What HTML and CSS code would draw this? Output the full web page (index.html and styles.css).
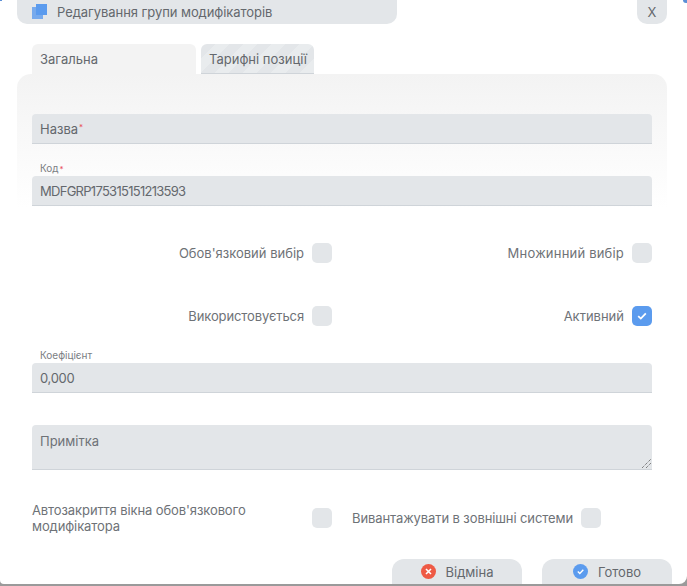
FILE: index.html
```html
<!DOCTYPE html>
<html lang="uk">
<head>
<meta charset="utf-8">
<title>Редагування групи модифікаторів</title>
<link rel="stylesheet" href="styles.css">
</head>
<body>
<span class="peek peek-left"></span>
<span class="peek peek-right"></span>
<div class="dialog">
  <header class="head">
    <div class="title">
      <svg class="title-icon" width="15" height="15" viewBox="0 0 15 15"><rect x="4" y="0" width="11" height="11" fill="#5b9bee"/><rect x="0" y="3" width="11" height="12" fill="#5b9bee" opacity=".8"/></svg>
      <span class="title-text">Редагування групи модифікаторів</span>
    </div>
    <button class="close">X</button>
  </header>
  <nav class="tabs">
    <div class="tab tab-active">Загальна</div>
    <div class="tab tab-off">Тарифні позиції</div>
  </nav>
  <main class="panel">
    <div class="field field-name"><div class="input">Назва<i class="req">*</i></div></div>
    <div class="field field-code">
      <label class="mini">Код<i class="req">*</i></label>
      <div class="input input-code">MDFGRP175315151213593</div>
    </div>
    <div class="checks checks-a">
      <div class="check"><span>Обов'язковий вибір</span><b class="box"></b></div>
      <div class="check"><span class="wide">Множинний вибір</span><b class="box"></b></div>
    </div>
    <div class="checks checks-b">
      <div class="check"><span class="tight">Використовується</span><b class="box"></b></div>
      <div class="check"><span>Активний</span><b class="box box-on"><svg width="10" height="8" viewBox="0 0 10 8"><path d="M1.2 4.2 3.8 6.6 8.8 1.4" fill="none" stroke="#fff" stroke-width="1.8"/></svg></b></div>
    </div>
    <div class="field field-coef">
      <label class="mini">Коефіцієнт</label>
      <div class="input input-num">0,000</div>
    </div>
    <div class="note">Примітка
      <svg class="grip" width="9" height="9" viewBox="0 0 9 9"><path d="M0 9 9 0M4 9 9 4" stroke="#555" stroke-width="1" stroke-dasharray="1 1" fill="none"/></svg>
    </div>
    <div class="bottom-row">
      <div class="auto"><span class="auto-text">Автозакриття вікна обов'язкового модифікатора</span><b class="box"></b></div>
      <div class="export"><span class="tight">Вивантажувати в зовнішні системи</span><b class="box"></b></div>
    </div>
  </main>
  <footer class="actions">
    <button class="btn"><svg width="15" height="15" viewBox="0 0 15 15"><circle cx="7.5" cy="7.5" r="7.5" fill="#ee5a45"/><path d="M5 5l5 5M10 5l-5 5" stroke="#fff" stroke-width="1.6"/></svg>Відміна</button>
    <button class="btn"><svg width="15" height="15" viewBox="0 0 15 15"><circle cx="7.5" cy="7.5" r="7.5" fill="#5b9bee"/><path d="M4.8 7.6 6.8 9.5 10.3 5.8" fill="none" stroke="#fff" stroke-width="1.4"/></svg>Готово</button>
  </footer>
</div>
</body>
</html>
```
FILE: styles.css
```css
* { box-sizing: border-box; }
html, body { margin: 0; padding: 0; height: 586px; overflow: hidden; background: #9a9a9a; }
body { position: relative; font-family: "Inter", "Noto Sans", sans-serif; font-size: 13px; color: #64686d; }
.peek { position: absolute; top: 0; z-index: 1; background: #5b8fd6; }
.peek-left { left: 0; width: 2px; height: 1px; }
.peek-right { right: 0; width: 4px; height: 3px; border-radius: 0 0 0 4px; }
.dialog { width: 687px; height: 584px; background: #fff; border-radius: 0 0 8px 4px; padding: 0 20px 0 17px; display: flex; flex-direction: column; }
.dialog > * { flex: none; }
.head { display: flex; justify-content: space-between; height: 24px; }
.title { width: 380px; height: 24px; background: #e3e6e9; border-radius: 0 0 10px 10px; display: flex; align-items: center; padding-left: 15px; gap: 10px; color: #64686d; }
.title-text { letter-spacing: -.07px; }
.title-icon { margin-top: -2px; }
.close { width: 30px; height: 24px; border: 0; background: #e3e6e9; border-radius: 0 0 10px 10px; font: inherit; color: #64686d; padding: 0; }
.tabs { display: flex; gap: 5px; margin: 20px 0 0 15px; height: 30px; }
.tab { border-radius: 6px 6px 0 0; display: flex; align-items: center; padding: 0 8px; }
.tab-active { width: 164px; background: #f3f3f3; }
.tab-off { width: 113px; white-space: nowrap; border-bottom: 1px solid #cfd4d9; background: repeating-linear-gradient(135deg, #e3e6e9 0 10px, #e9ecee 10px 20px); }
.panel { padding: 40px 15px 0; border-radius: 14px 14px 0 0; background: linear-gradient(#f3f3f3 0, #fff 134px); }
.input { height: 30px; background: #e3e6e9; border-bottom: 1px solid #cfd4d9; border-radius: 4px 4px 0 0; padding: 0 8px; display: flex; align-items: center; color: #64686d; }
.input-code { letter-spacing: -.72px; }
.input-num { letter-spacing: -.3px; }
.req { color: #e8505b; font-style: normal; font-size: 8px; margin-left: 1px; margin-top: -3px; }
.mini { display: block; height: 14px; padding-left: 8px; font-size: 10px; line-height: 12px; color: #7a7e83; }
.field-code { margin-top: 18px; }
.field-coef { margin-top: 23px; }
.checks { display: grid; grid-template-columns: 300px 320px; }
.checks-a { margin-top: 37px; }
.checks-b { margin-top: 43px; }
.check { display: flex; justify-content: flex-end; align-items: center; gap: 8px; height: 20px; color: #6e7277; }
.wide { letter-spacing: .2px; }
.tight { letter-spacing: -.1px; }
.box { width: 20px; height: 20px; background: #e3e6e9; border-radius: 5px; display: flex; align-items: center; justify-content: center; flex: none; }
.box-on { background: #5b9bee; }
.note { position: relative; height: 45px; margin-top: 32px; background: #e3e6e9; border-bottom: 1px solid #cfd4d9; border-radius: 4px 4px 0 0; padding: 8px; line-height: 16px; color: #6e7277; }
.grip { position: absolute; right: 1px; bottom: 1px; }
.bottom-row { display: flex; align-items: center; height: 30px; margin-top: 33px; color: #6e7277; }
.auto { display: flex; align-items: center; width: 300px; justify-content: space-between; line-height: 16px; }
.auto-text { width: 250px; letter-spacing: -.1px; }
.export { display: flex; align-items: center; gap: 8px; margin-left: 20px; }
.actions { display: flex; gap: 20px; justify-content: flex-end; margin: 26px -5px 0 0; }
.btn { width: 130px; height: 25px; border: 0; border-radius: 12px 12px 0 0; background: #e3e6e9; font: inherit; color: #64686d; display: flex; align-items: center; justify-content: center; gap: 10px; padding: 0; }
```
